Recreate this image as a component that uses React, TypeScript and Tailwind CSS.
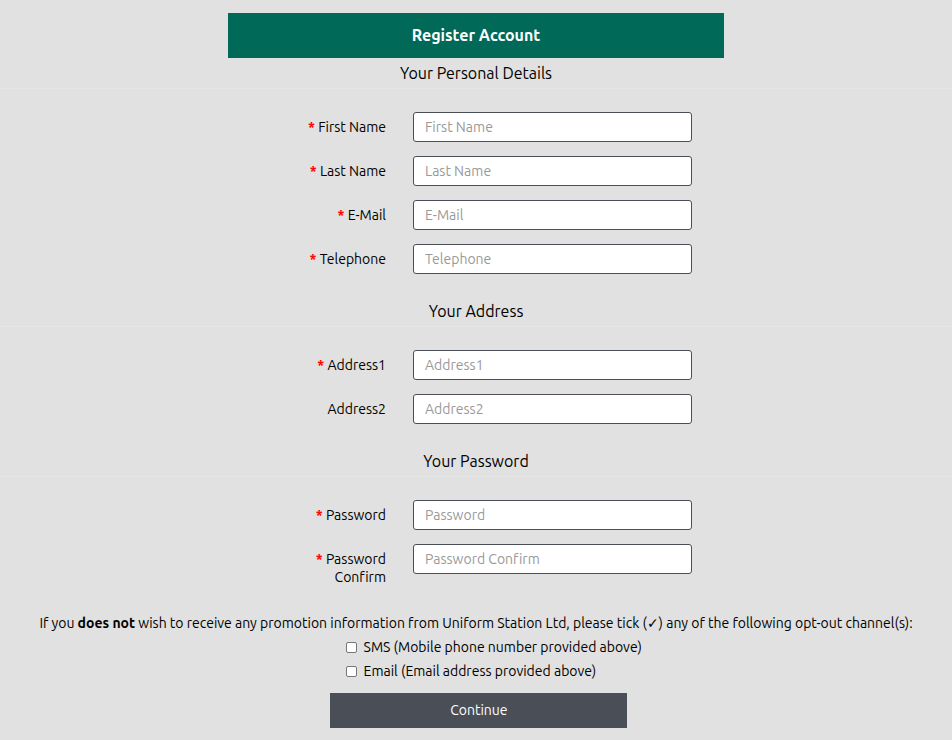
type FieldProps = {
  id: string;
  label: string;
  type?: string;
  required?: boolean;
};

function Field({ id, label, type = "text", required = true }: FieldProps) {
  return (
    <div className="grid grid-cols-[386fr_279fr_233fr] items-start gap-x-[27px]">
      <label htmlFor={id} className="max-w-24 justify-self-end pt-1.5 text-right leading-[18px]">
        {required && <span className="font-bold text-[#ff0000]">* </span>}
        {label}
      </label>
      <input
        id={id}
        name={id}
        type={type}
        placeholder={label}
        required={required}
        className="h-[30px] w-full min-w-0 rounded-[3px] border border-[#4a4e57] bg-white px-[11px] text-black placeholder:text-[#999999]"
      />
    </div>
  );
}

function Section({ title, fields }: { title: string; fields: FieldProps[] }) {
  return (
    <fieldset className="mb-[22px]">
      <legend className="w-full border-b border-[#e5e5e5] text-center text-base leading-[30px]">
        {title}
      </legend>
      <div className="flex flex-col gap-3.5 pt-[23px]">
        {fields.map((field) => (
          <Field key={field.id} {...field} />
        ))}
      </div>
    </fieldset>
  );
}

function OptOut({ id, label }: { id: string; label: string }) {
  return (
    <div className="flex items-center gap-[7px]">
      <input
        id={id}
        name={id}
        type="checkbox"
        className="size-[11px] appearance-none rounded-[2px] border border-[#767676] bg-white checked:bg-[#4a4e57]"
      />
      <label htmlFor={id}>{label}</label>
    </div>
  );
}

export default function App() {
  return (
    <main className="min-h-screen bg-[#e1e1e1] pt-[13px] pb-3 font-['Ubuntu','Noto_Sans',sans-serif] text-sm text-black [font-variant-ligatures:none]">
      <h1 className="mx-auto w-[52%] bg-[#006958] text-center text-base leading-[45px] font-bold text-white">
        Register Account
      </h1>
      <form>
        <Section
          title="Your Personal Details"
          fields={[
            { id: "firstname", label: "First Name" },
            { id: "lastname", label: "Last Name" },
            { id: "email", label: "E-Mail", type: "email" },
            { id: "telephone", label: "Telephone", type: "tel" },
          ]}
        />
        <Section
          title="Your Address"
          fields={[
            { id: "address1", label: "Address1" },
            { id: "address2", label: "Address2", required: false },
          ]}
        />
        <Section
          title="Your Password"
          fields={[
            { id: "password", label: "Password", type: "password" },
            { id: "confirm", label: "Password Confirm", type: "password" },
          ]}
        />
        <p className="pt-[3px] text-center leading-6">
          If you <b>does not</b> wish to receive any promotion information from Uniform Station Ltd,
          please tick (<span className="font-['DejaVu_Sans',sans-serif]">✓</span>) any of the
          following opt-out channel(s):
        </p>
        <div className="ml-[36.3%] leading-6">
          <OptOut id="optout-sms" label="SMS (Mobile phone number provided above)" />
          <OptOut id="optout-email" label="Email (Email address provided above)" />
        </div>
        <button
          type="submit"
          className="mt-2.5 ml-[34.7%] block w-[31.2%] bg-[#4a4e57] pb-px text-center leading-[34px] text-white"
        >
          Continue
        </button>
      </form>
    </main>
  );
}
